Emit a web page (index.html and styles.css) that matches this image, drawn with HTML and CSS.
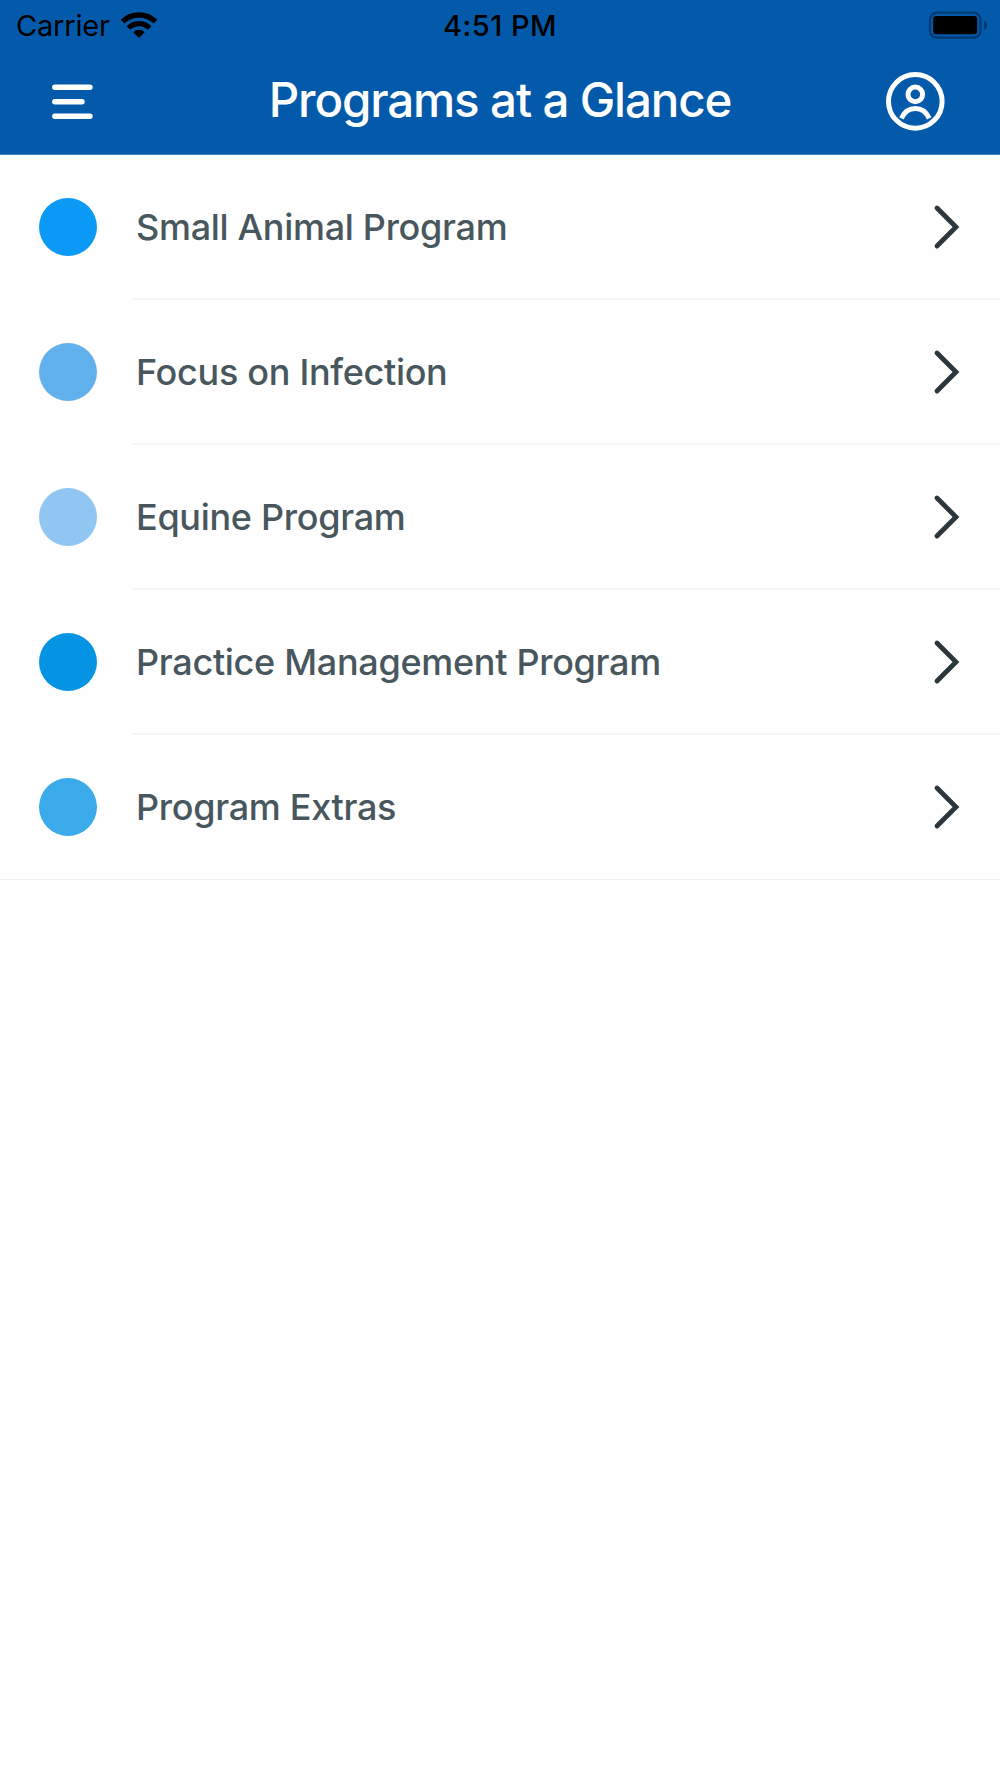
FILE: index.html
```html
<!DOCTYPE html>
<html lang="en">

<head>
  <meta charset="UTF-8">
  <meta name="viewport" content="width=device-width, initial-scale=1.0">
  <title>Programs at a Glance</title>
  <link rel="stylesheet" href="styles.css">
</head>

<body>
  <header class="header">
    <div class="status-bar">
      <div class="carrier">
        <span class="carrier-name">Carrier</span>
        <svg class="wifi" width="38" height="28" viewBox="0 0 38 28">
          <path d="M2.6 10.6 A23.5 23.5 0 0 1 35.4 10.6" fill="none" stroke="#000" stroke-width="5.4"/>
          <path d="M8.4 17 A15 15 0 0 1 29.6 17" fill="none" stroke="#000" stroke-width="5.2"/>
          <path d="M19 27 L13.3 21.3 A7.8 7.8 0 0 1 24.7 21.3 Z"/>
        </svg>
      </div>
      <span class="time">4:51 PM</span>
      <svg class="battery" width="60" height="28" viewBox="0 0 60 28">
        <rect x="2" y="1.7" width="50.5" height="25" rx="7" fill="none" stroke="#023a70" stroke-width="2.2"/>
        <rect x="5.2" y="5" width="44" height="18.2" rx="3"/>
        <path d="M56 9.5 Q59.2 11 59.2 14.2 Q59.2 17.4 56 19 Z" fill="#023a70"/>
      </svg>
    </div>
    <nav class="nav-bar">
      <svg class="menu" width="41" height="36" viewBox="0 0 41 36">
        <path d="M2.8 3.2 H38 M2.8 17.7 H30 M2.8 32.2 H38" stroke="#fff" stroke-width="5.4" stroke-linecap="round"/>
      </svg>
      <h1 class="title">Programs at a Glance</h1>
      <svg class="profile" width="60" height="60" viewBox="0 0 60 60" fill="none" stroke="#fff" stroke-width="5">
        <circle cx="30.3" cy="29.4" r="26.8"/>
        <circle cx="30.3" cy="22.4" r="7.3"/>
        <path d="M16.4 46.4 C22.4 33.3 38.2 33.3 44.2 46.4"/>
      </svg>
    </nav>
  </header>

  <ul class="programs">
    <li class="program">
      <span class="dot dot-small-animal"></span>
      <a class="row">
        <span class="name">Small Animal Program</span>
        <svg class="chevron" width="30" height="46" viewBox="0 0 30 46"><path d="M4 4 L23 23 L4 42"/></svg>
      </a>
    </li>
    <li class="program">
      <span class="dot dot-infection"></span>
      <a class="row">
        <span class="name">Focus on Infection</span>
        <svg class="chevron" width="30" height="46" viewBox="0 0 30 46"><path d="M4 4 L23 23 L4 42"/></svg>
      </a>
    </li>
    <li class="program">
      <span class="dot dot-equine"></span>
      <a class="row">
        <span class="name">Equine Program</span>
        <svg class="chevron" width="30" height="46" viewBox="0 0 30 46"><path d="M4 4 L23 23 L4 42"/></svg>
      </a>
    </li>
    <li class="program">
      <span class="dot dot-practice"></span>
      <a class="row">
        <span class="name">Practice Management Program</span>
        <svg class="chevron" width="30" height="46" viewBox="0 0 30 46"><path d="M4 4 L23 23 L4 42"/></svg>
      </a>
    </li>
    <li class="program">
      <span class="dot dot-extras"></span>
      <a class="row">
        <span class="name">Program Extras</span>
        <svg class="chevron" width="30" height="46" viewBox="0 0 30 46"><path d="M4 4 L23 23 L4 42"/></svg>
      </a>
    </li>
  </ul>
</body>

</html>
```
FILE: styles.css
```css
:root {
  --header-bg: #0359aa;
  --page-bg: #fefefe;
  --text: #48565d;
  --line: #f0f1f1;
}

* {
  box-sizing: border-box;
}

body {
  margin: 0;
  min-height: 100vh;
  background-color: var(--page-bg);
  font-family: Inter, Roboto, sans-serif;
}

svg {
  display: block;
}

.header {
  height: 155px;
  background-color: var(--header-bg);
  border-bottom: 1px solid #3c7fbe;
}

.status-bar {
  display: grid;
  grid-template-columns: 1fr auto 1fr;
  align-items: center;
  height: 50px;
  padding: 0 12px 0 16px;
  font-size: 29px;
  line-height: 50px;
  color: #000;
}

.carrier {
  display: flex;
  align-items: center;
  gap: 10px;
}

.carrier-name {
  letter-spacing: -0.2px;
}

.wifi {
  margin-bottom: 2px;
}

.time {
  padding: 1px 4px 0 0;
  font-weight: 500;
  letter-spacing: 0.5px;
}

.battery {
  justify-self: end;
  margin-bottom: 1px;
}

.nav-bar {
  display: grid;
  grid-template-columns: 1fr auto 1fr;
  align-items: center;
  height: 104px;
  padding: 0 55px 0 52px;
}

.title {
  margin: 0;
  padding: 0 0 6px 3px;
  font-size: 47.5px;
  font-weight: 500;
  line-height: 95px;
  letter-spacing: -1.15px;
  color: #fff;
}

.profile {
  justify-self: end;
}

.programs {
  margin: 0;
  padding: 0;
  list-style: none;
  border-bottom: 1px solid var(--line);
}

.program {
  display: flex;
  align-items: center;
  height: 144.9px;
  padding-left: 39px;
}

.dot {
  width: 58px;
  height: 58px;
  margin: 0 36px 1px 0;
  border-radius: 50%;
}

.dot-small-animal { background-color: #0a9af5; }
.dot-infection { background-color: #60b0eb; }
.dot-equine { background-color: #91c6f3; }
.dot-practice { background-color: #0593e4; }
.dot-extras { background-color: #3aaaeb; }

.row {
  display: flex;
  flex: 1;
  align-items: center;
  justify-content: space-between;
  height: 100%;
  padding: 1px 37px 0 3px;
  border-bottom: 2px solid #f5f5f5;
}

.program:last-child .row {
  border-bottom-color: transparent;
}

.name {
  font-size: 36px;
  font-weight: 500;
  letter-spacing: -0.3px;
  color: var(--text);
}

.chevron path {
  fill: none;
  stroke: #2b363d;
  stroke-width: 4.8;
  stroke-linecap: round;
}
```
